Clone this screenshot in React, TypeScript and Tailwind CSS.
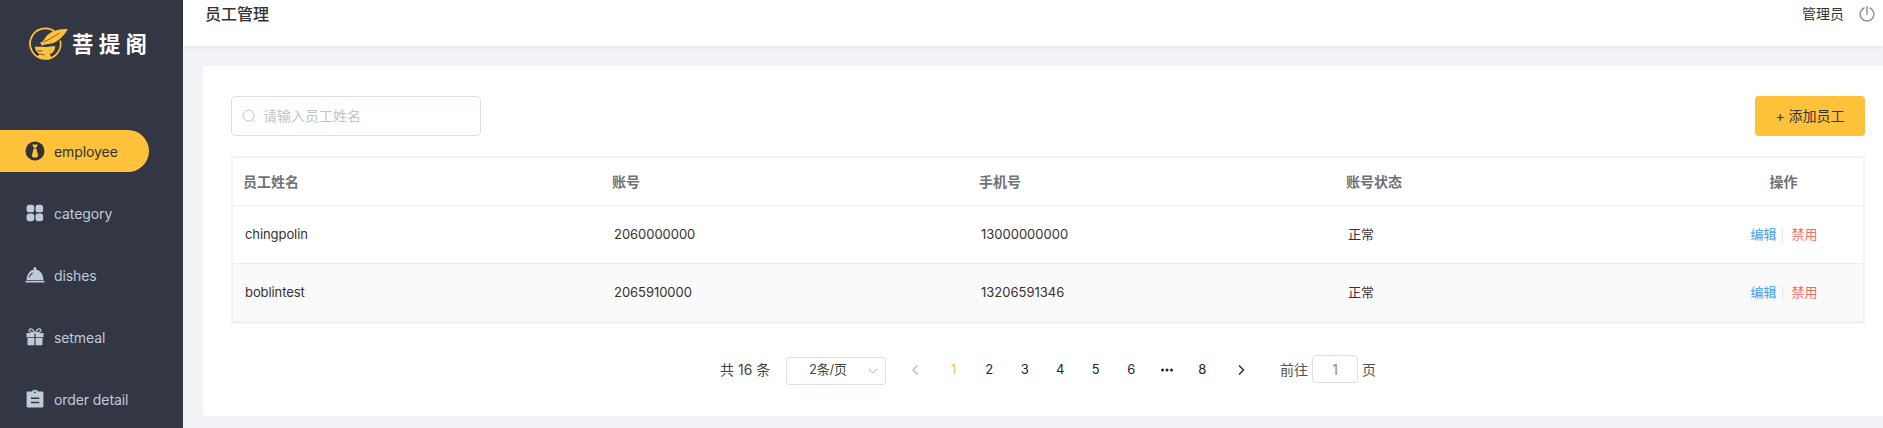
import React from "react";

type IconProps = { className?: string };

const EmployeeIcon = ({ className }: IconProps) => (
  <svg viewBox="0 0 20 20" className={className}>
    <circle cx="10" cy="10" r="9.5" fill="currentColor" />
    <path d="M7.2 3.6h5.6l-1.5 3.2H8.700zM8.700 7.500h2.600l1.900 7.200-1.200 1.800H8L6.800 14.700z" fill="#ffc23a" />
  </svg>
);

const CategoryIcon = ({ className }: IconProps) => (
  <svg viewBox="0 0 20 20" className={className} fill="currentColor">
    <rect x="1.6" y="1.7" width="7.6" height="7.6" rx="2.6" />
    <rect x="10.5" y="1.7" width="7.6" height="7.6" rx="2.6" />
    <rect x="1.6" y="10.6" width="7.6" height="7.6" rx="2.6" />
    <rect x="10.5" y="10.6" width="7.6" height="7.6" rx="2.6" />
  </svg>
);

const DishIcon = ({ className }: IconProps) => (
  <svg viewBox="0 0 20 20" className={className}>
    <circle cx="10" cy="3.6" r="1.5" fill="currentColor" />
    <path d="M1.6 14.9C1.8 9 5.2 4.4 10 4.4s8.200 4.600 8.400 10.500z" fill="currentColor" />
    <rect x="0.5" y="15.800" width="19" height="1.700" rx="0.500" fill="currentColor" />
    <path d="M4.300 11.900c.6-1.700 1.500-2.900 2.900-3.700" fill="none" stroke="#333744" strokeWidth="1.200" strokeLinecap="round" />
  </svg>
);

const GiftIcon = ({ className }: IconProps) => (
  <svg viewBox="0 0 20 20" className={className} fill="currentColor">
    <path d="M9.700 6C8.500 3.200 7.300 1.900 5.800 1.900c-1.500 0-2.200 1.500-1.300 2.500C5.200 5.200 7 5.600 9.700 6zM10.300 6c1.200-2.800 2.400-4.100 3.900-4.100 1.500 0 2.200 1.500 1.300 2.500-.7.8-2.500 1.200-5.200 1.600z" fill="none" stroke="currentColor" strokeWidth="1.200" />
    <path d="M2 6h7.400v4.300H1.500V6.500zM10.600 6h7.900v4.300h-7.900zM2.500 11.100h6.900v7.100H3.300q-.8 0-.8-.8zM10.600 11.100h6.900v6.300q0 .8-.8.800h-6.100z" />
  </svg>
);

const OrderIcon = ({ className }: IconProps) => (
  <svg viewBox="0 0 20 20" className={className}>
    <path d="M2.900 2.500h3.900Q7.500.7 10 .7t3.200 1.800h3.900q1.300 0 1.300 1.300v13.400q0 1.300-1.300 1.300H2.900q-1.300 0-1.300-1.300V3.800q0-1.300 1.300-1.300z" fill="currentColor" />
    <path d="M6 9.200h8.300M6 13.500h8.300" stroke="#333744" strokeWidth="1.400" />
    <circle cx="10" cy="3.300" r=".9" fill="#333744" />
  </svg>
);

const Logo = () => (
  <svg viewBox="0 0 40 34" className="h-[34px] w-[40px] shrink-0">
    <path d="M27 4.800A15.300 15.300 0 1 0 32.300 13.500" fill="none" stroke="#ffc23a" strokeWidth="1.700" />
    <path d="M39.800 2C30 1.500 22 5 18.500 9c-1.600 2-2.400 4-4 5.700l-2.500 1 1.600 2 .8 1.500c.3-1.800 4.800-1.600 9-2.600C30.500 14.500 35.500 9.500 39.800 2z" fill="#ffc23a" />
    <path d="M15.500 15C21 13 26 9.500 31.500 6" fill="none" stroke="#333744" strokeWidth=".7" />
    <path d="M6.800 19.700h7.700c3 .8 6-.5 12.800-.5-.3 4.200-2.600 7-5.500 8.100l2 3.700-3 1.500-9.500-1-2.500-2 3.200-2.200c-2.900-1.500-4.900-4-5.200-7.600z" fill="#ffc23a" />
    <path d="M9.500 23.900h5M12 27l4.500 1" fill="none" stroke="#333744" strokeWidth=".8" />
  </svg>
);

const menu = [
  { label: "employee", Icon: EmployeeIcon, active: true },
  { label: "category", Icon: CategoryIcon, active: false },
  { label: "dishes", Icon: DishIcon, active: false },
  { label: "setmeal", Icon: GiftIcon, active: false },
  { label: "order detail", Icon: OrderIcon, active: false },
];

const rows = [
  { name: "chingpolin", account: "2060000000", phone: "13000000000", status: "正常" },
  { name: "boblintest", account: "2065910000", phone: "13206591346", status: "正常" },
];

const cols = "grid grid-cols-[369px_367px_367px_367px_1fr] items-center";

function Sidebar() {
  return (
    <aside className="h-full w-[183px] shrink-0 overflow-hidden bg-[#333744]">
      <div className="flex h-[130px] items-start pl-[28px] pt-[27px]">
        <Logo />
        <span className="ml-[4px] mt-[2px] whitespace-nowrap text-[21.500px] font-bold leading-[31px] tracking-[5.300px] text-white">菩提阁</span>
      </div>
      <nav className="flex flex-col gap-[20px]">
        {menu.map(({ label, Icon, active }) => (
          <a
            key={label}
            className={
              active
                ? "flex h-[42px] w-[149px] items-center gap-[9px] rounded-r-full bg-[#ffc23a] pl-[25px] text-[14px] text-[#333333]"
                : "flex h-[42px] w-[149px] items-center gap-[9px] pl-[25px] text-[14px] text-[#bfcbd9]"
            }
          >
            <Icon className="size-[20px] shrink-0" />
            <span className="whitespace-nowrap tracking-[-0.090px]">{label}</span>
          </a>
        ))}
      </nav>
    </aside>
  );
}

function Pagination() {
  return (
    <div className="mt-[32px] flex h-[28px] items-center pl-[489px] text-[13px] text-[#303133]">
      <span className="w-[66px] whitespace-nowrap pb-[2px] text-[14px] text-[#444]">共 16 条</span>
      <div className="mt-px flex h-[28px] w-[100px] items-center justify-between rounded-[3px] border border-[#dcdfe6] pl-[22px] pr-[7px] text-[#444]">
        <span className="pb-[2px] tracking-[-0.200px]">2条/页</span>
        <svg viewBox="0 0 10 10" className="size-[10px]" fill="none" stroke="#c0c4cc" strokeWidth="1">
          <path d="M1 3l4 4 4-4" />
        </svg>
      </div>
      <svg viewBox="0 0 10 12" className="ml-[24px] mr-[16px] h-[12px] w-[10px]" fill="none" stroke="#b4b8c0" strokeWidth="1.300">
        <path d="M7.500 1.500L3 6l4.500 4.500" />
      </svg>
      {["1", "2", "3", "4", "5", "6", "…", "8"].map((p) => (
        <span key={p} className={p === "1" ? "flex w-[35.500px] justify-center text-[#ffc23a]" : "flex w-[35.500px] justify-center text-[#222427]"}>
          {p === "…" ? (
            <svg viewBox="0 0 14 4" className="h-[4px] w-[14px]" fill="currentColor">
              <circle cx="2.500" cy="2" r="1.500" />
              <circle cx="7" cy="2" r="1.500" />
              <circle cx="11.500" cy="2" r="1.500" />
            </svg>
          ) : (
            p
          )}
        </span>
      ))}
      <svg viewBox="0 0 10 12" className="ml-[16px] h-[12px] w-[10px]" fill="none" stroke="#303133" strokeWidth="1.500">
        <path d="M3 1.500L7.500 6 3 10.500" />
      </svg>
      <span className="ml-[34px] w-[32px] whitespace-nowrap pb-[2px] text-[14px] text-[#505255]">前往</span>
      <div className="mb-[2px] flex h-[28px] w-[46px] items-center justify-center rounded-[4px] border border-[#dcdfe6] text-[14px] text-[#8a8d93]">1</div>
      <span className="ml-[4px] pb-[2px] text-[14px] text-[#505255]">页</span>
    </div>
  );
}

export default function App() {
  return (
    <div className="flex h-[428px] w-full overflow-hidden bg-[#f2f3f7] font-['Inter','Noto_Sans_CJK_SC',sans-serif]">
      <Sidebar />
      <div className="flex min-w-0 flex-1 flex-col">
        <header className="z-10 flex h-[46px] shrink-0 items-start justify-between bg-white pl-[22px] pr-[8px] shadow-[0_1px_4px_rgba(0,21,41,0.08)]">
          <h1 className="text-[16px] font-medium leading-[28px] text-[#333]">员工管理</h1>
          <div className="flex items-center leading-[28px]">
            <span className="text-[14px] text-[#333]">管理员</span>
            <svg viewBox="0 0 16 16" className="ml-[15px] size-[16px]" fill="none" stroke="#8f9296" strokeWidth="1.500" strokeLinecap="round">
              <path d="M8 .8v7.500M5 2a6.900 6.900 0 1 0 6 0" />
            </svg>
          </div>
        </header>
        <main className="ml-[20px] mt-[20px] h-[350px] rounded-l-[4px] bg-white pl-[28px] pr-[18px] pt-[30px]">
          <div className="flex justify-between">
            <div className="flex h-[40px] w-[250px] items-center gap-[7px] rounded-[4px] border border-[#dcdfe6] pl-[10px] text-[14px] text-[#c0c4cc]">
              <svg viewBox="0 0 14 14" className="size-[14px]" fill="none" stroke="#c0c4cc" strokeWidth="1">
                <circle cx="6.600" cy="6.600" r="5.500" />
                <path d="M10.600 10.600l2.100 2.100" />
              </svg>
              <span className="pb-[2px]">请输入员工姓名</span>
            </div>
            <button className="h-[40px] w-[110px] rounded-[4px] bg-[#ffc23a] pb-[2px] text-[14px] text-[#333]">+ 添加员工</button>
          </div>
          <section className="mt-[20px] h-[168px] border-2 border-b-[3px] border-[#f2f3f7]">
            <div className={`${cols} h-[48px] border-b border-[#ebeef5] text-[14px] font-semibold text-[#707276]`}>
              <span className="pl-[10px]">员工姓名</span>
              <span className="pl-[10px]">账号</span>
              <span className="pl-[10px]">手机号</span>
              <span className="pl-[10px]">账号状态</span>
              <span className="pl-px text-center">操作</span>
            </div>
            {rows.map((r, i) => (
              <div
                key={r.name}
                className={
                  i === 0
                    ? `${cols} h-[58px] border-b border-[#ebeef5] text-[13px] text-[#333]`
                    : `${cols} h-[57px] bg-[#fafafa] text-[13px] text-[#333]`
                }
              >
                <span className="pl-[12px] tracking-[-0.080px]">{r.name}</span>
                <span className="pl-[12px] tracking-[-0.040px]">{r.account}</span>
                <span className="pl-[12px]">{r.phone}</span>
                <span className="pl-[12px]">{r.status}</span>
                <div className="flex items-center justify-center pl-[2px]">
                  <span className="text-[#419eef]">编辑</span>
                  <i className="mx-[5px] h-[14px] w-px bg-[#e4e7ed]" />
                  <span className="ml-[4px] text-[#f56c6c]">禁用</span>
                </div>
              </div>
            ))}
          </section>
          <Pagination />
        </main>
      </div>
    </div>
  );
}
